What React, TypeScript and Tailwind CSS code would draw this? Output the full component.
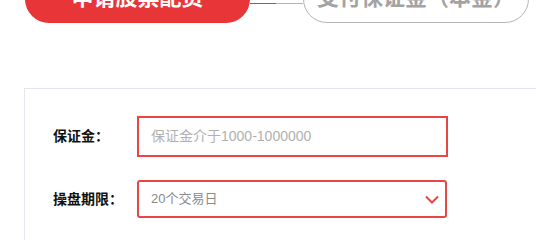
export default function App() {
  return (
    <div className="w-[536px] h-[240px] overflow-hidden bg-white font-['Liberation_Sans','Noto_Sans_CJK_SC',sans-serif]">
      {/* Steps */}
      <div className="flex items-start pl-[25px] -mt-[27px]">
        <div className="w-[225px] h-[50px] shrink-0 rounded-[24px] bg-[#e83538] text-white text-[22px] font-bold leading-[50px] text-center">
          申请股票配资
        </div>
        <div className="mt-[30px] h-px w-[26px] shrink-0 bg-[#e83538]" />
        <div className="mt-[30px] h-px w-[27px] shrink-0 bg-[#b5b5b5]" />
        <div className="w-[226px] h-[50px] shrink-0 rounded-[24px] border border-[#b5b5b5] text-[#a3a3a3] text-[22px] font-bold leading-[48px] text-center">
          支付保证金（本金）
        </div>
      </div>

      {/* Form card */}
      <div className="ml-[24px] mt-[65px] w-[560px] h-[200px] border border-[#e6e6ef] pt-[27px]">
        <div className="flex items-center">
          <div className="w-[112px] shrink-0 pl-[28px] text-[14px] font-bold text-[#111]">保证金：</div>
          <div className="w-[311px] h-[41px] border-2 border-[#e84646] flex items-center pl-[12px] text-[14px] text-[#b0b0b0]">
            保证金介于1000-1000000
          </div>
        </div>
        <div className="flex items-center mt-[23px]">
          <div className="w-[112px] shrink-0 pl-[28px] text-[14px] font-bold text-[#111]">操盘期限：</div>
          <div className="w-[310px] h-[38px] rounded-[3px] border-2 border-[#e84646] flex items-center justify-between pl-[12px] pr-[6px] text-[13px] text-[#8a8a8a]">
            <span>20个交易日</span>
            <svg width="14" height="9" viewBox="0 0 14 9" fill="none">
              <polyline points="1,1.5 7,7.5 13,1.5" stroke="#e84646" strokeWidth="2" />
            </svg>
          </div>
        </div>
      </div>
    </div>
  )
}
